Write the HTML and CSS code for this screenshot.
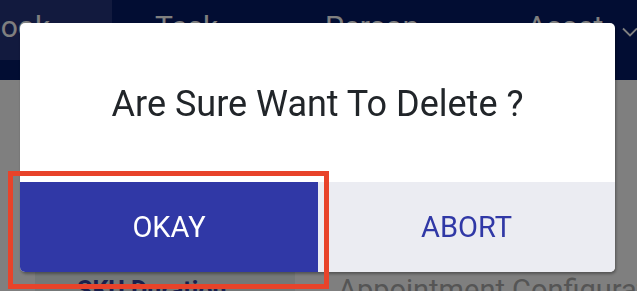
FILE: index.html
```html
<!DOCTYPE html>
<html lang="en">
<head>
<meta charset="utf-8">
<title>Delete confirmation</title>
<link rel="stylesheet" href="styles.css">
</head>
<body>
<div class="app">
  <header class="topbar">
    <nav class="tabs">
      <div class="tab active">Book</div>
      <div class="tab">Task</div>
      <div class="tab">Person</div>
      <div class="tab">Asset
        <svg class="chev" width="16" height="10" viewBox="0 0 16 10"><path d="M1 1.5 L8 8.5 L15 1.5" fill="none" stroke="currentColor" stroke-width="1.8"/></svg>
      </div>
    </nav>
  </header>
  <main class="content">
    <div class="subtabs">
      <div class="subtab active">SKU Duration</div>
      <div class="subtab">Appointment Configuration</div>
    </div>
  </main>
</div>
<div class="backdrop"></div>
<div class="dialog" role="dialog">
  <div class="dialog-body">
    <p class="dialog-title">Are Sure Want To Delete ?</p>
  </div>
  <div class="dialog-actions">
    <button class="btn btn-ok">OKAY</button>
    <button class="btn btn-abort">ABORT</button>
  </div>
</div>
<div class="highlight"></div>
</body>
</html>
```
FILE: styles.css
```css
html, body {
  margin: 0;
  padding: 0;
}
body {
  width: 637px;
  height: 291px;
  overflow: hidden;
  background: #ffffff;
  font-family: Roboto, "Liberation Sans", sans-serif;
}
.app {
  display: flex;
  flex-direction: column;
}
.topbar {
  height: 80px;
  background: #041a66;
}
.tabs {
  display: flex;
  height: 60px;
  white-space: nowrap;
}
.tab {
  display: flex;
  align-items: flex-start;
  padding-top: 9px;
  box-sizing: border-box;
  font-size: 30px;
  line-height: 35px;
  color: #ffffff;
  flex: none;
}
.tab:nth-child(1) { width: 112px; text-indent: -18px; background: #24347c; overflow: hidden; }
.tab:nth-child(2) { width: 213px; padding-left: 43px; }
.tab:nth-child(3) { width: 202px; padding-left: 0; }
.tab:nth-child(4) { padding-left: 0; }
.chev {
  margin-left: 19px;
  margin-top: 18px;
}
.content {
  padding: 182px 0 0 35px;
}
.subtabs {
  display: flex;
}
.subtab {
  height: 50px;
  box-sizing: border-box;
  padding-top: 11px;
  font-size: 29px;
  line-height: 34px;
  color: #aaaaaa;
  white-space: nowrap;
  flex: none;
}
.subtab.active {
  width: 260px;
  padding-left: 42px;
  padding-top: 12px;
  background: #e8f0f0;
  color: #343f96;
  font-weight: 700;
  font-size: 25px;
}
.subtab:not(.active) {
  padding-left: 43px;
}
.backdrop {
  position: fixed;
  inset: 0;
  background: rgba(0, 0, 0, 0.5);
}
.dialog {
  position: fixed;
  left: 20px;
  top: 23px;
  width: 595px;
  border-radius: 5px;
  overflow: hidden;
  background: #ffffff;
  box-shadow: 1px 2px 3px rgba(0, 0, 0, 0.35);
}
.dialog-body {
  height: 159px;
  display: flex;
  align-items: center;
  justify-content: center;
}
.dialog-title {
  margin: 0;
  font-size: 36px;
  color: #212529;
  padding-top: 2px;
}
.dialog-actions {
  display: flex;
  height: 90px;
}
.btn {
  border: 0;
  margin: 0;
  padding: 0;
  font-family: Roboto, "Liberation Sans", sans-serif;
  font-size: 29px;
  cursor: pointer;
}
.btn-ok {
  width: 298px;
  background: #3038a6;
  color: #ffffff;
}
.btn-abort {
  flex: 1;
  background: #ebecf2;
  color: #3038a6;
}
.highlight {
  position: fixed;
  left: 8px;
  top: 171px;
  width: 321px;
  height: 118px;
  box-sizing: border-box;
  border: 5px solid #e8432a;
}
```
